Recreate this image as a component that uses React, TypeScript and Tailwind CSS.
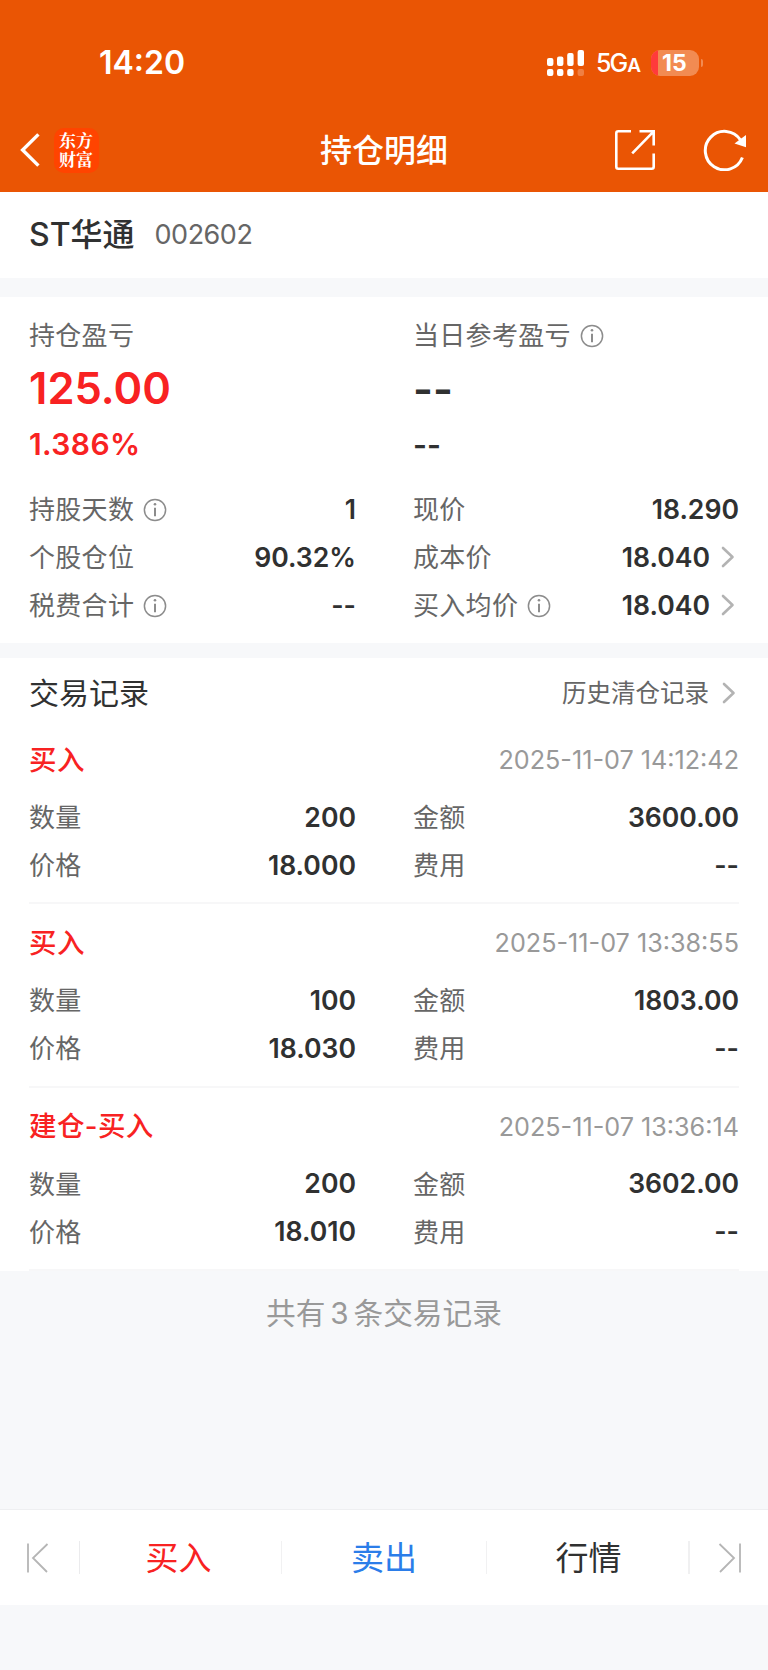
import type { ReactNode } from 'react';

interface TradeRecord {
  type: string;
  time: string;
  quantity: string;
  price: string;
  amount: string;
  fee: string;
}

const records: TradeRecord[] = [
  { type: '买入', time: '2025-11-07 14:12:42', quantity: '200', price: '18.000', amount: '3600.00', fee: '--' },
  { type: '买入', time: '2025-11-07 13:38:55', quantity: '100', price: '18.030', amount: '1803.00', fee: '--' },
  { type: '建仓-买入', time: '2025-11-07 13:36:14', quantity: '200', price: '18.010', amount: '3602.00', fee: '--' },
];

function InfoIcon() {
  return (
    <svg className="ml-[9px] mt-[2px] h-6 w-6 shrink-0 text-[#8c8c8c]" viewBox="0 0 24 24" fill="none" stroke="currentColor">
      <circle cx="12" cy="12" r="10.6" strokeWidth={1.5} />
      <path d="M12 9.8v8.4" strokeWidth={2} />
      <circle cx="12" cy="6.3" r="1.3" fill="currentColor" stroke="none" />
    </svg>
  );
}

function ChevronIcon() {
  return (
    <svg className="ml-3 mr-[3px] h-6 w-[14px] shrink-0" viewBox="0 0 14 24" fill="none" stroke="#b3b3b3" strokeWidth={2.6}>
      <path d="M2 3l9.5 9L2 21" strokeLinecap="round" strokeLinejoin="round" />
    </svg>
  );
}

function Row({ label, value, info, link }: { label: string; value: string; info?: boolean; link?: boolean }) {
  return (
    <div className="flex h-12 items-center">
      <span className="pt-[2px] text-[26px] tracking-[0.3px] text-[#666]">{label}</span>
      {info && <InfoIcon />}
      <span className="-mr-px ml-auto text-[26.6px] font-semibold">{value}</span>
      {link && <ChevronIcon />}
    </div>
  );
}

function StatusBar() {
  return (
    <div className="flex h-[125px] items-center pl-[99px] pr-[65px]">
      <span className="pt-px text-[32px] font-semibold">14:20</span>
      <svg className="ml-auto h-[26px] w-[38px]" viewBox="0 0 38 26" fill="currentColor">
        <rect x="0" y="8" width="6.4" height="8" rx="2" />
        <rect x="10" y="6.4" width="6.4" height="9.6" rx="2" />
        <rect x="20.2" y="3" width="6.4" height="13" rx="2" />
        <rect x="30.6" y="0" width="6.4" height="16" rx="2" />
        <rect x="0" y="19" width="6.4" height="7" rx="2" />
        <rect x="10" y="19" width="6.4" height="7" rx="2" />
        <rect x="20.2" y="19" width="6.4" height="7" rx="2" />
        <rect x="30.6" y="19" width="6.4" height="7" rx="2" opacity="0.25" />
      </svg>
      <span className="ml-[11px] flex w-[44px] items-baseline pt-[2px] text-[25px] font-medium tracking-[-2px]">
        5G<span className="ml-[1px] text-[19px] font-semibold">A</span>
      </span>
      <div className="ml-[11px] flex h-[26px] w-12 items-center overflow-hidden rounded-[9px] bg-[#f28b52]">
        <div className="h-full w-[7px] bg-[#ff3b3b]" />
        <span className="ml-1 pt-[2px] text-[23px] font-bold">15</span>
      </div>
      <div className="ml-[2px] h-2 w-[2px] rounded-r-full bg-[#f28b52]" />
    </div>
  );
}

function NavBar() {
  return (
    <div className="grid h-[50px] grid-cols-[1fr_auto_1fr] items-center">
      <div className="flex items-center pl-5">
        <svg className="h-9 w-5" viewBox="0 0 20 36" fill="none" stroke="currentColor" strokeWidth={3.4}>
          <path d="M18.4 2.4L2.6 18l15.8 15.6" />
        </svg>
        <div className="ml-[14px] flex h-[45px] w-[45px] items-center justify-center rounded-[10px] bg-[#ff4400] pb-[3px]">
          <span className="w-[35px] break-all font-['Noto_Serif_CJK_SC','Noto_Sans_CJK_SC',sans-serif] text-[17px] font-bold leading-[19px]">
            东方财富
          </span>
        </div>
      </div>
      <h1 className="pt-[2px] text-[32px] font-medium">持仓明细</h1>
      <div className="flex items-center justify-end pr-[21px]">
        <svg className="h-[42px] w-[42px]" viewBox="0 0 42 42" fill="none" stroke="currentColor" strokeWidth={2.6}>
          <path d="M17 2.3H4.3a2 2 0 00-2 2v33.4a2 2 0 002 2h33.4a2 2 0 002-2V24.5" />
          <path d="M25.5 2.3h14.2v14.2M39.2 2.8L18.2 24.4" />
        </svg>
        <svg className="ml-[47px] h-[42px] w-[44px]" viewBox="0 0 44 42" fill="none" stroke="currentColor" strokeWidth={3}>
          <path d="M39.4 28.5A19.2 19.2 0 1137.4 10.8" />
          <path d="M43 6v12.3L31.5 14.5z" fill="currentColor" stroke="none" />
        </svg>
      </div>
    </div>
  );
}

function Summary() {
  return (
    <section className="mt-[19px] bg-white px-[29px] pb-[14px] pt-[14px]">
      <div className="grid grid-cols-[326px_325px] gap-x-[58px]">
        <div>
          <div className="flex h-12 items-center pt-[2px] text-[26px] tracking-[0.3px] text-[#666]">持仓盈亏</div>
          <div className="flex h-[59px] items-center text-[43.5px] font-semibold text-[#f82222]">125.00</div>
          <div className="flex h-[53px] items-center pb-[2px] text-[30px] font-semibold tracking-[0.4px] text-[#f82222]">
            1.386%
          </div>
        </div>
        <div>
          <div className="flex h-12 items-center text-[26px] tracking-[0.3px] text-[#666]">
            <span className="pt-[2px]">当日参考盈亏</span>
            <InfoIcon />
          </div>
          <div className="flex h-[59px] items-center pt-[2px] text-[43px] font-semibold">--</div>
          <div className="flex h-[53px] items-center text-[30px] font-semibold">--</div>
        </div>
        <div className="mt-[14px]">
          <Row label="持股天数" value="1" info />
          <Row label="个股仓位" value="90.32%" />
          <Row label="税费合计" value="--" info />
        </div>
        <div className="mt-[14px]">
          <Row label="现价" value="18.290" />
          <Row label="成本价" value="18.040" link />
          <Row label="买入均价" value="18.040" info link />
        </div>
      </div>
    </section>
  );
}

function RecordItem({ record }: { record: TradeRecord }) {
  return (
    <div className="h-[183.33px] border-b-2 border-[#f7f7f8] pt-[15px]">
      <div className="mb-2 flex h-[49px] items-center justify-between">
        <span className="text-[27.5px] font-medium tracking-[0.4px] text-[#f82222]">{record.type}</span>
        <span className="text-[25.2px] text-[#999]">{record.time}</span>
      </div>
      <div className="grid grid-cols-[326px_325px] gap-x-[58px]">
        <Row label="数量" value={record.quantity} />
        <Row label="金额" value={record.amount} />
        <Row label="价格" value={record.price} />
        <Row label="费用" value={record.fee} />
      </div>
    </div>
  );
}

function Tab({ children, className }: { children: ReactNode; className: string }) {
  return <button className={`flex h-[33px] items-center justify-center text-[33px] ${className}`}>{children}</button>;
}

export default function App() {
  return (
    <div className="flex h-[1670px] w-[768px] flex-col bg-[#f7f8fa] font-['Inter','Noto_Sans_CJK_SC',sans-serif] leading-none text-[#303131]">
      <header className="h-48 bg-[#ea5504] text-white">
        <StatusBar />
        <NavBar />
      </header>

      <div className="flex h-[86px] items-center bg-white px-[29px] pb-[2px]">
        <span className="pt-[2px] text-[32px] font-medium">ST华通</span>
        <span className="ml-5 text-[27px] tracking-[-0.5px] text-[#666]">002602</span>
      </div>

      <Summary />

      <section className="mt-[15px] bg-white px-[29px]">
        <div className="flex h-[63px] items-center justify-between pt-[7px]">
          <h2 className="pb-px text-[30px]">交易记录</h2>
          <div className="flex items-center text-[24.5px] text-[#666]">
            <span className="mr-px">历史清仓记录</span>
            <ChevronIcon />
          </div>
        </div>
        {records.map((record) => (
          <RecordItem key={record.time} record={record} />
        ))}
      </section>

      <p className="mt-[28px] text-center text-[29.7px] text-[#999] [word-spacing:-3.5px]">
        共有 {records.length} 条交易记录
      </p>

      {/* Bottom trading bar */}
      <nav className="mb-[65px] mt-auto grid h-[96px] grid-cols-[80px_202px_205px_203px_78px] items-center border-t border-[#eeeff1] bg-white">
        <button className="flex h-[33px] items-center border-r border-[#ebebed] pl-[26px]">
          <svg className="h-[30px] w-[23px]" viewBox="0 0 23 30" fill="none" stroke="#b5b5b5" strokeWidth={1.8}>
            <path d="M2 .5v29M21.5 1L7 15l14 14" />
          </svg>
        </button>
        <Tab className="border-r border-[#f1f1f2] pr-[4px] pt-px text-[#f82222]">买入</Tab>
        <Tab className="border-r border-[#f1f1f2] pt-px text-[#2b7de9]">卖出</Tab>
        <Tab className="border-r-2 border-[#f0f0f1] pl-[2px] pt-px">行情</Tab>
        <button className="flex h-[33px] items-center pl-[28px]">
          <svg className="h-[30px] w-[23px]" viewBox="0 0 23 30" fill="none" stroke="#b5b5b5" strokeWidth={1.8}>
            <path d="M22 .5v29M1.5 1L16 15 2 29" />
          </svg>
        </button>
      </nav>
    </div>
  );
}
